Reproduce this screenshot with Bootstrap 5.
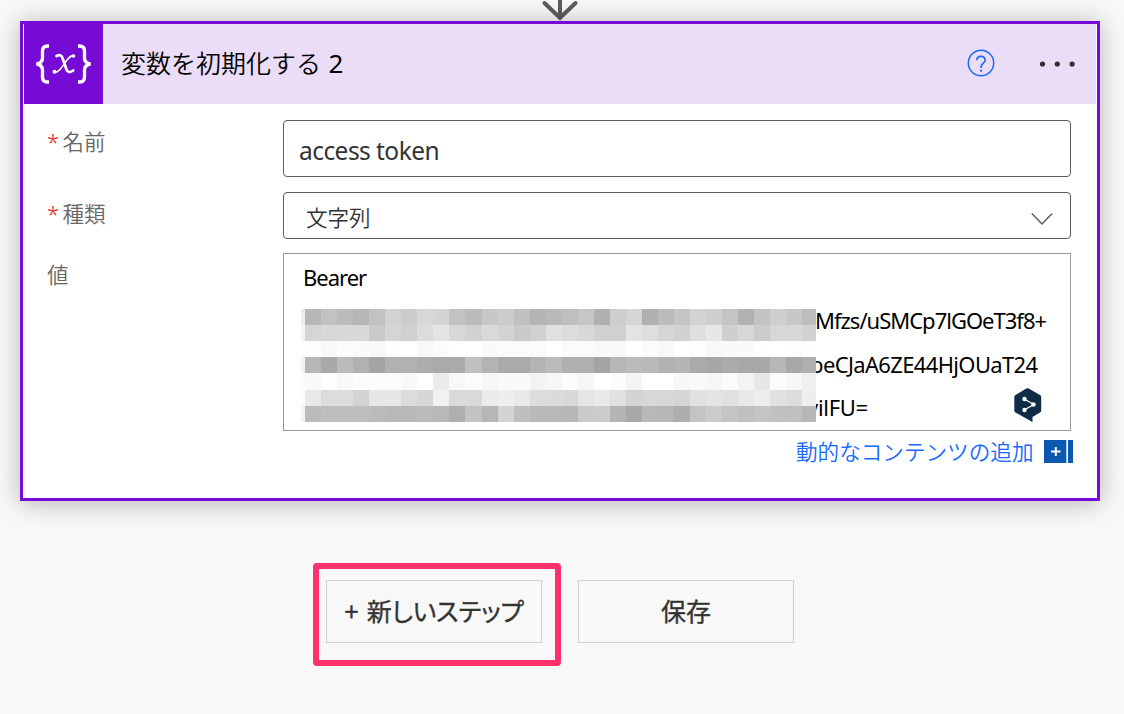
<!DOCTYPE html>
<html lang="ja">
<head>
<meta charset="utf-8">
<meta name="viewport" content="width=device-width, initial-scale=1">
<title>変数を初期化する 2</title>
<link rel="stylesheet" href="https://cdn.jsdelivr.net/npm/bootstrap@5.3.0/dist/css/bootstrap.min.css">
<style>
body{background:#f8f8f8;font-family:"Noto Sans","Noto Sans CJK JP",sans-serif;height:714px;overflow:hidden;color:#333}
.jp{font-family:"Noto Sans CJK JP",sans-serif;font-weight:350}
.flow-arrow{height:21px}
.step{width:1080px;height:480px;margin-left:20px;border:3px solid #770bd6;border-radius:0;padding:0 1px;box-shadow:0 2px 24px rgba(0,0,0,.28)}
.step-head{height:80px;background:#ebdcf8}
.step-icon{width:79px;background:#770bd6}
.step-title{font-size:25px;color:#000;margin-left:18px;line-height:76px;height:80px}
.step-title .num{font-family:"Noto Sans";font-weight:400;margin-left:2px;font-size:26px}
.help{margin:-3px 44px 0 0}
.dots{margin:-2px 20px 0 0}
.step-body{padding:16px 25px 0 23px}
.lab{width:236px;font-size:21.5px;color:#666;line-height:41px;white-space:nowrap}
.req{color:#e81123;font-family:"Noto Sans";font-size:22px;display:inline-block;width:15.5px}
.field{border:1px solid #605e5c;border-radius:4px;width:788px}
.f-name{height:57px;font-size:24.5px;letter-spacing:-.55px;padding:5px 0 0 15px;margin-bottom:15px}
.f-kind{height:47px;font-size:21.5px;padding:3px 17px 0 22px}
.f-kind svg{margin-top:3px}
.value-row{margin-top:14px}
.f-value{height:178px;border-color:#999;border-radius:0;font-size:22px;letter-spacing:-1px;color:#000;padding:2px 0 0 19px;line-height:43.3px;position:relative;white-space:nowrap;overflow:hidden}
.f-value .tail{padding-left:512px}
.f-value .tail-b{padding-left:507px;letter-spacing:-.65px}
.f-value .tail-c{padding-left:504px;letter-spacing:-.3px}
.mosaic{position:absolute;left:17px;top:54.5px;width:515px;height:113.5px;display:grid;grid-template-columns:4px repeat(31,16.06px) 1fr;grid-template-rows:repeat(7,1fr)}
.deepl{position:absolute;left:730px;top:134px}
.dyn{font-size:21.6px;color:#1769ff;line-height:40px;height:42px}
.dyn span{margin-top:-2px}
.dynicon{margin:-2px -2px 0 10.5px}
.flow-actions{margin:62px 0 0 313px}
.mark-box{width:248px;height:103px;border:6px solid #ff316d;border-radius:4px;padding:11px 0 0 7px}
.flow-btn{width:216px;height:63px;border:1px solid #d0d0d0;border-radius:0;background:#f8f8f8;font-family:"Noto Sans CJK JP",sans-serif;font-weight:400;-webkit-text-stroke:.35px #333;font-size:25px;color:#333;padding:0 0 2px;white-space:nowrap}
.save{margin:17px 0 0 17px}
.new{font-feature-settings:"palt";word-spacing:3px;letter-spacing:-.1px}
</style>
</head>
<body>
<div class="flow-arrow">
<svg class="d-block" width="1124" height="21" fill="none" stroke="#5c5c5c" stroke-width="4" stroke-linecap="round"><path d="M560 -4V17M544.500 3L560 18L575.500 3"/></svg>
</div>
<main class="card step">
  <div class="step-head d-flex align-items-center">
    <div class="step-icon h-100 flex-shrink-0">
      <svg width="79" height="80" viewBox="0 0 79 80" fill="none" stroke="#fff"><path stroke-width="3.300" stroke-linejoin="bevel" d="M25 22h-1.500q-5 0-5 5v7q0 5-6 6 6 1 6 6v7q0 5 5 5H25M54 22h1.500q5 0 5 5v7q0 5 6 6-6 1-6 6v7q0 5-5 5H54"/><path stroke-width="2.700" stroke-linecap="round" d="M32.500 32q4.500-2.500 6 2l4 11.500q1.700 4.500 6.700 1"/><path stroke-width="1.500" stroke-linecap="round" d="M50 31.800c-7-2.500-12 18-20 16.500"/><circle cx="49.500" cy="32" r="1.800" fill="#fff" stroke="none"/><circle cx="30.500" cy="47.800" r="2" fill="#fff" stroke="none"/></svg>
    </div>
    <div class="step-title jp flex-grow-1">変数を初期化する <span class="num">2</span></div>
    <svg class="help" width="28" height="28" viewBox="0 0 28 28" fill="none" stroke="#1769ff"><circle cx="14" cy="14" r="12.700" stroke-width="1.500"/><path stroke-width="1.700" d="M9.800 11.200c0-5.200 8.300-5 8.300-.3 0 3.600-4 3.600-4 7.400v.8"/><path stroke-width="2" d="M14.100 20.700v2"/></svg>
    <svg class="dots" width="37" height="10" viewBox="0 0 37 10" fill="#323130"><circle cx="3.500" cy="6" r="2.600"/><circle cx="18.300" cy="6" r="2.600"/><circle cx="33.100" cy="6" r="2.600"/></svg>
  </div>
  <div class="step-body">
    <div class="d-flex"><div class="lab jp"><span class="req">*</span>名前</div><div class="field f-name d-flex align-items-center">access token</div></div>
    <div class="d-flex"><div class="lab jp"><span class="req">*</span>種類</div><div class="field f-kind jp d-flex align-items-center justify-content-between">文字列<svg width="22" height="14" fill="none" stroke="#605e5c" stroke-width="1.500"><path d="M.8 1.500L11 12L21.200 1.500"/></svg></div></div>
    <div class="d-flex value-row"><div class="lab jp">値</div>
      <div class="field f-value">
        <div>Bearer</div>
        <div class="tail">Mfzs/uSMCp7lGOeT3f8+</div>
        <div class="tail-b">beCJaA6ZE44HjOUaT24</div>
        <div class="tail-c">vilFU=</div>
        <div class="mosaic" id="mosaic"></div>
        <svg class="deepl" width="28" height="35" viewBox="0 0 28 35"><path fill="#0f2b46" d="M12.300.5q1.200-.7 2.400 0L26 7q1.200.7 1.200 2v13.500q0 1.300-1.200 2L18.500 29v5L1.500 24.500q-1.200-.7-1.200-2V9q0-1.300 1.200-2z"/><path d="M10 11L20 16.500L10 22" fill="none" stroke="#fff" stroke-width="1.300"/><g fill="#fff"><circle cx="10.500" cy="11" r="2.200"/><circle cx="19.500" cy="16.500" r="2.200"/><circle cx="10.500" cy="22" r="2.200"/></g></svg>
      </div>
    </div>
    <div class="dyn jp d-flex justify-content-end align-items-center"><span>動的なコンテンツの追加</span><svg class="dynicon" width="29" height="23"><path fill="#0b59b0" d="M0 0h22v23H0zM24 0h5v23h-5z"/><path fill="#a9c8e8" d="M22 0h1v23h-1z"/><path stroke="#fff" stroke-width="2" d="M7 11.500h9.500M11.800 7v9"/></svg></div>
  </div>
</main>
<div class="flow-actions d-flex align-items-start">
  <div class="mark-box"><button class="btn flow-btn"><span class="new">+ 新しいステップ</span></button></div>
  <button class="btn flow-btn save">保存</button>
</div>
<script src="https://cdn.jsdelivr.net/npm/bootstrap@5.3.0/dist/js/bootstrap.bundle.min.js"></script>
<script>
// Gray levels of the redaction mosaic, one row per line
const levels = [
"ee b6 c2 bb b6 c2 d2 cc d7 d4 c2 bb c7 cc c0 b5 b9 bf c6 b0 ce d5 b0 bc c5 d3 ce c4 b1 c3 cf c8 bd",
"f5 d5 d8 d8 d8 c9 d5 d0 dc e4 d8 d1 d9 d3 ca d1 e0 dc d8 d1 d0 e3 de d5 d1 df e7 cf d7 cb d7 d7 d1",
"fe fe f9 fc fa f8 fd ff f8 fb ff ff fa fb fb fb ff fb fc f9 f8 ff fb f8 ff fd f8 fa fa fe ff fd fe",
"f2 b6 a9 bb b1 a4 b1 b1 ac aa ab c0 b3 aa aa b3 bb b0 b0 a4 b6 bb b9 b2 b5 aa a7 ab a8 a9 b6 a8 af",
"fb f9 fe f9 fc fc fb f8 ff eb f8 fb f7 fa fa f3 f6 fc f6 ff fc f4 ff ff f7 f9 f6 fb f3 e7 fb f7 ef",
"fb e8 dc dc d3 e7 e7 dc d6 f1 da d9 eb ee e9 dd db d8 e5 e9 e1 d4 d7 d7 d5 e1 e4 e1 e8 ed e1 dd ee",
"f3 bb be be be bb b8 b8 bc b8 af c3 b6 d4 be b9 b9 b7 ca cb b4 a9 b8 b6 ae c4 cc c4 c0 c4 c1 c0 b7"];
document.getElementById('mosaic').innerHTML = levels.join(' ').split(' ').map(v => `<i style="background:#${v}${v}${v}"></i>`).join('');
</script>
</body>
</html>
